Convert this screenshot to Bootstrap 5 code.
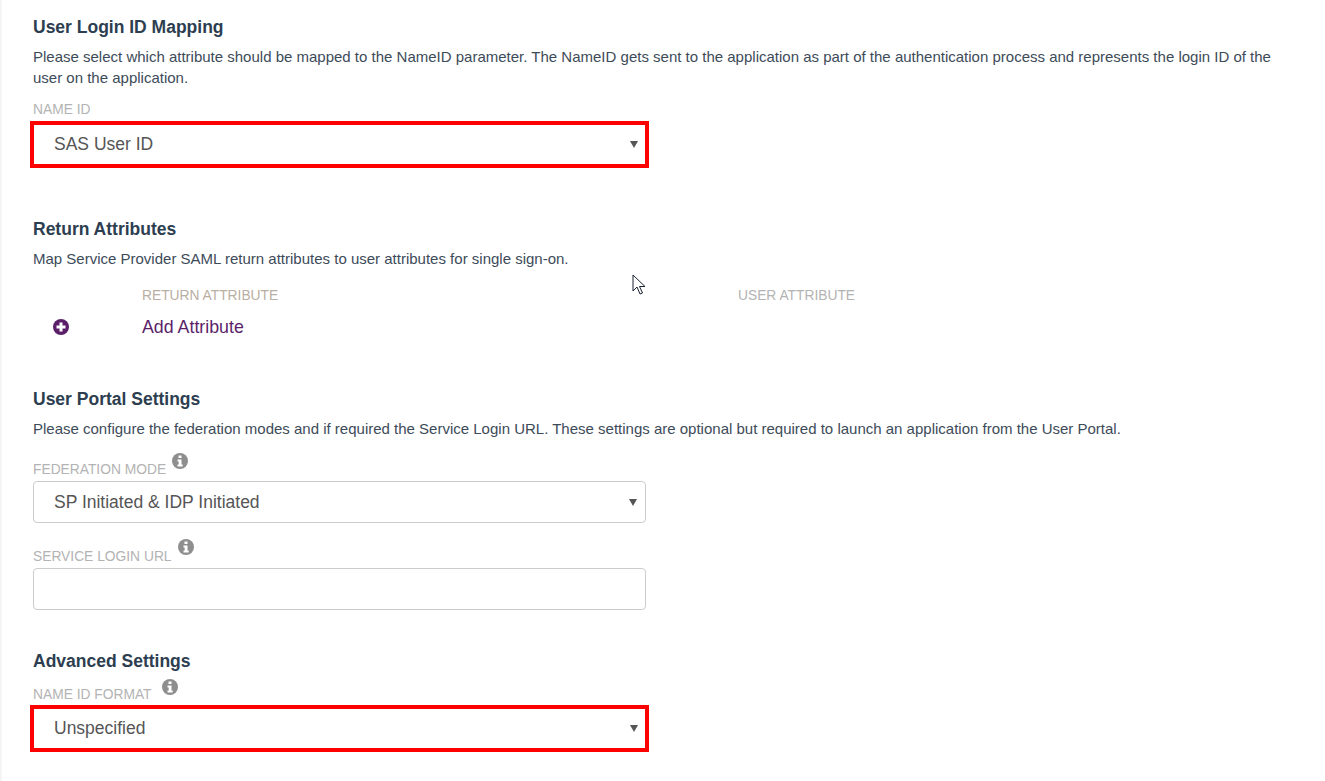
<!doctype html>
<html lang="en">
  <head>
    <meta charset="UTF-8" />
    <meta name="viewport" content="width=device-width, initial-scale=1" />
    <title>SAML Settings</title>
    <link href="https://cdn.jsdelivr.net/npm/bootstrap@5.3.0/dist/css/bootstrap.min.css" rel="stylesheet" />
    <style>
      body { font-family: "Liberation Sans", Arial, sans-serif; background: #fff; color: #34495e; overflow: hidden; }
      .page-wrap { padding: 16px 33px 0 31px; border-left: 2px solid #f5f5f5; height: 781px; position: relative; }
      .sec-title { font-size: 17.5px; font-weight: 700; line-height: 22px; color: #2c3e50; margin: 0; }
      .sec-text { font-size: 15px; line-height: 21px; color: #3d4b59; margin: 0; }
      .fld-label { display: block; font-size: 13.8px; line-height: 16px; color: #b3b3b3; margin: 0; text-transform: uppercase; }
      .fld-box { width: 613px; height: 42px; font-family: inherit; font-size: 17.5px; color: #555; padding: 0 20px; border: 1px solid #ccc; border-radius: 4px; box-shadow: none; background-position: right 8px center; background-size: 8px 7px; background-image: url("data:image/svg+xml,%3csvg xmlns='http://www.w3.org/2000/svg' viewBox='0 0 8 7'%3e%3cpath fill='%23555' d='M0 0h8L4 7z'/%3e%3c/svg%3e"); }
      input.fld-box { background-image: none; }
      .fld-marked { height: 41px; padding-left: 21px; border: 0; border-radius: 0; outline: 4px solid #f00; outline-offset: -1px; }
      .info-dot { width: 16px; height: 16px; display: block; }
      .plus-dot { width: 16px; height: 16px; display: block; }
      .attr-first { width: 109px; }
      .attr-second { width: 596px; }
      .attr-add { font-size: 17.8px; line-height: 20px; color: #5b1f6a; text-decoration: none; }
      .tan-label { color: #b9aea3; }
      .mouse-arrow { position: absolute; left: 630px; top: 274px; width: 14px; height: 21px; }
    </style>
  </head>
  <body>
    <div class="page-wrap">
      <h5 class="sec-title">User Login ID Mapping</h5>
      <p class="sec-text" style="margin-top: 8px">Please select which attribute should be mapped to the NameID parameter. The NameID gets sent to the application as part of the authentication process and represents the login ID of the user on the application.</p>
      <label class="fld-label" style="margin-top: 14px">Name ID</label>
      <select class="form-select fld-box fld-marked" style="margin-top: 6px"><option>SAS User ID</option></select>

      <h5 class="sec-title" style="margin-top: 53px">Return Attributes</h5>
      <p class="sec-text" style="margin-top: 8px">Map Service Provider SAML return attributes to user attributes for single sign-on.</p>
      <div class="d-flex" style="margin-top: 19px">
        <div class="attr-first"></div>
        <div class="attr-second"><span class="fld-label tan-label">Return Attribute</span></div>
        <div><span class="fld-label">User Attribute</span></div>
      </div>
      <div class="d-flex align-items-center" style="margin-top: 13px">
        <div class="attr-first" style="padding-left: 20px">
          <svg class="plus-dot" viewBox="0 0 16 16"><circle cx="8" cy="8" r="8" fill="#5b1f6a" /><path d="M3.500 6.500h3v-3h3v3h3v3h-3v3h-3v-3h-3z" fill="#fff" /></svg>
        </div>
        <a class="attr-add" href="#">Add Attribute</a>
      </div>

      <h5 class="sec-title" style="margin-top: 51px">User Portal Settings</h5>
      <p class="sec-text" style="margin-top: 8px">Please configure the federation modes and if required the Service Login URL. These settings are optional but required to launch an application from the User Portal.</p>
      <div class="d-flex align-items-start" style="margin-top: 11px">
        <label class="fld-label" style="margin-top: 12px">Federation Mode</label>
        <svg class="info-dot" style="margin-left: 6px; margin-top: 3px" viewBox="0 0 16 16"><use href="#info-shape" /></svg>
      </div>
      <select class="form-select fld-box" style="margin-top: 3px"><option>SP Initiated &amp; IDP Initiated</option></select>
      <div class="d-flex align-items-start" style="margin-top: 15px">
        <label class="fld-label" style="margin-top: 11px">Service Login URL</label>
        <svg class="info-dot" style="margin-left: 6px; margin-top: 1px" viewBox="0 0 16 16"><use href="#info-shape" /></svg>
      </div>
      <input class="form-control fld-box" type="text" style="margin-top: 3px" />

      <h5 class="sec-title" style="margin-top: 40px">Advanced Settings</h5>
      <div class="d-flex align-items-start" style="margin-top: 7px">
        <label class="fld-label" style="margin-top: 8px">Name ID Format</label>
        <svg class="info-dot" style="margin-left: 10px; margin-top: 0" viewBox="0 0 16 16"><use href="#info-shape" /></svg>
      </div>
      <select class="form-select fld-box fld-marked" style="margin-top: 5px"><option>Unspecified</option></select>

      <svg class="mouse-arrow" viewBox="0 0 14 21"><path d="M1 1v16l4-4 3 7 2.500-1-3-6.500h5.500z" fill="#fff" stroke="#1c2233" stroke-width="1" /></svg>
    </div>
    <svg width="0" height="0" class="position-absolute">
      <defs>
        <g id="info-shape">
          <circle cx="8" cy="8" r="8" fill="#8e8e8e" />
          <rect x="6.500" y="2.500" width="3" height="2.500" fill="#fff" />
          <path d="M5.500 6.500h4v5h1.200v2h-5.200v-2h1.200v-3h-1.200z" fill="#fff" />
        </g>
      </defs>
    </svg>
    <script src="https://cdn.jsdelivr.net/npm/bootstrap@5.3.0/dist/js/bootstrap.bundle.min.js"></script>
  </body>
</html>
